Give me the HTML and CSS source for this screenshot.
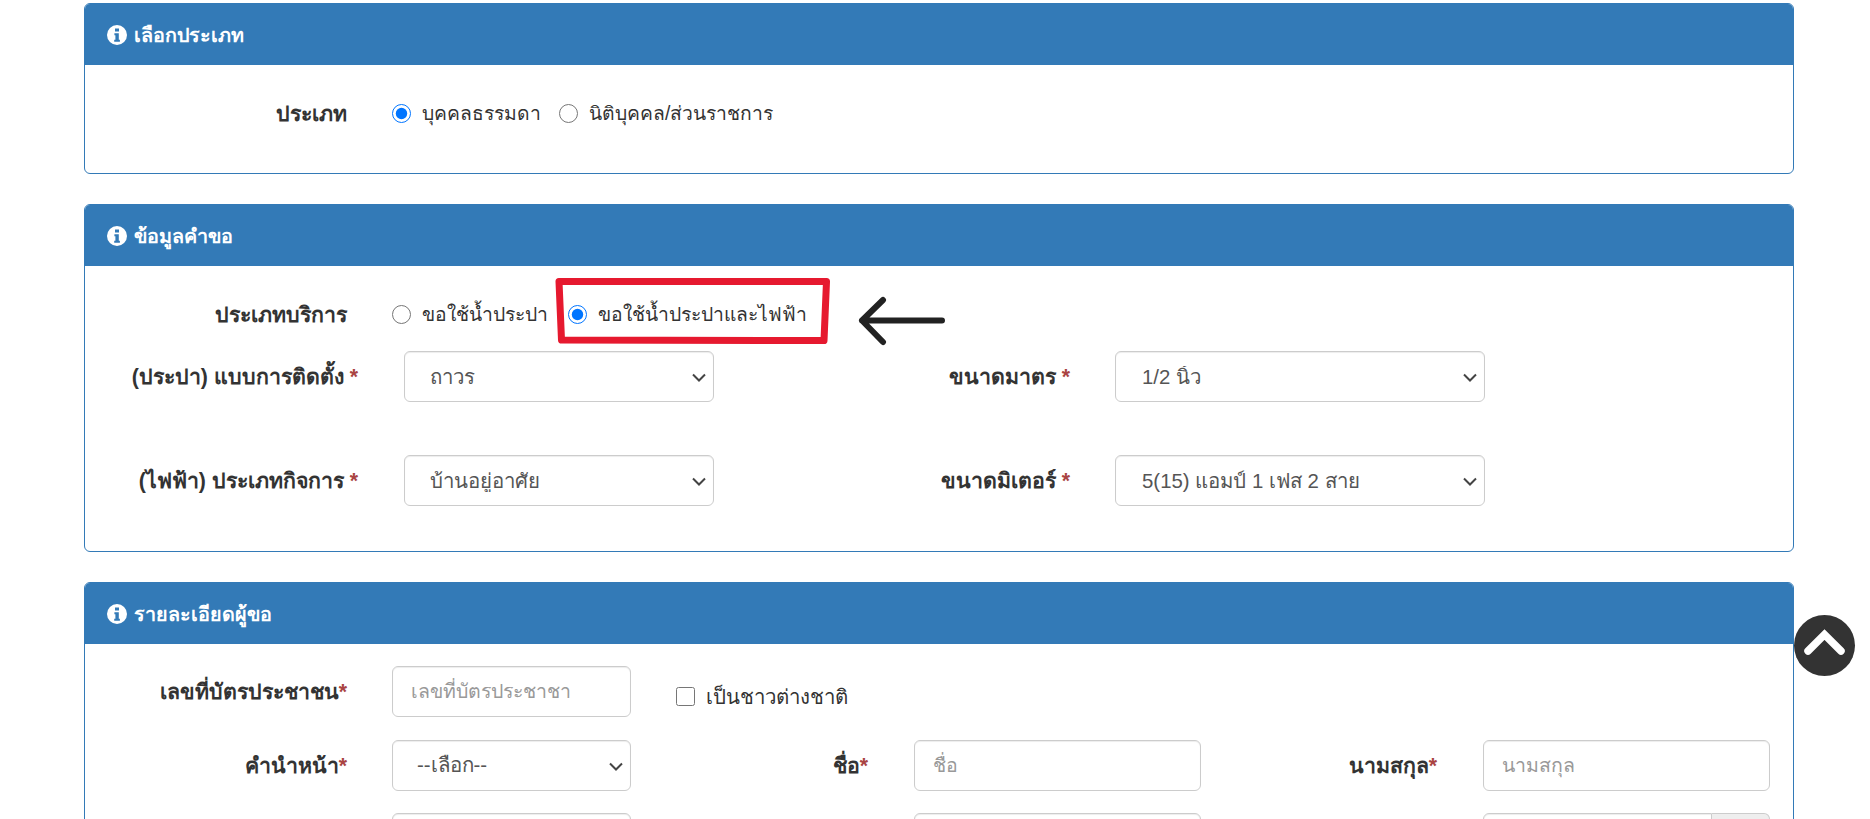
FILE: index.html
```html
<!DOCTYPE html>
<html lang="th">
<head>
<meta charset="utf-8">
<title>แบบฟอร์มคำขอ</title>
<link rel="stylesheet" href="styles.css">
</head>
<body>
<main class="page">
  <section class="panel panel-type">
    <h2 class="panel-heading"><svg class="info" viewBox="0 0 20 20"><circle cx="10" cy="10" r="10" fill="#fff"/><path d="M8 3.6h4v3h-4zM7.4 8.3h4.4v6.4h1.1v2H7.2v-2h1.2v-4.400H7.400z" fill="#337ab7"/></svg>เลือกประเภท</h2>
    <div class="panel-body">
      <div class="row row-radio">
        <span class="label">ประเภท</span>
        <label class="radio r1"><input type="radio" name="t" checked>บุคคลธรรมดา</label>
        <label class="radio"><input type="radio" name="t">นิติบุคคล/ส่วนราชการ</label>
      </div>
    </div>
  </section>

  <section class="panel panel-req">
    <h2 class="panel-heading"><svg class="info" viewBox="0 0 20 20"><circle cx="10" cy="10" r="10" fill="#fff"/><path d="M8 3.6h4v3h-4zM7.4 8.3h4.4v6.4h1.1v2H7.2v-2h1.2v-4.400H7.400z" fill="#337ab7"/></svg>ข้อมูลคำขอ</h2>
    <div class="panel-body">
      <div class="row row-radio row-service">
        <span class="label">ประเภทบริการ</span>
        <label class="radio r2"><input type="radio" name="s">ขอใช้น้ำประปา</label>
        <label class="radio"><input type="radio" name="s" checked>ขอใช้น้ำประปาและไฟฟ้า</label>
      </div>
      <div class="row row-select">
        <span class="label">(ประปา) แบบการติดตั้ง <em>*</em></span>
        <select class="control sel-left"><option>ถาวร</option></select>
        <span class="label label-right">ขนาดมาตร <em>*</em></span>
        <select class="control sel-right"><option>1/2 นิ้ว</option></select>
      </div>
      <div class="row row-select">
        <span class="label">(ไฟฟ้า) ประเภทกิจการ <em>*</em></span>
        <select class="control sel-left"><option>บ้านอยู่อาศัย</option></select>
        <span class="label label-right">ขนาดมิเตอร์ <em>*</em></span>
        <select class="control sel-right"><option>5(15) แอมป์ 1 เฟส 2 สาย</option></select>
      </div>
    </div>
  </section>

  <section class="panel panel-person">
    <h2 class="panel-heading"><svg class="info" viewBox="0 0 20 20"><circle cx="10" cy="10" r="10" fill="#fff"/><path d="M8 3.6h4v3h-4zM7.4 8.3h4.4v6.4h1.1v2H7.2v-2h1.2v-4.400H7.400z" fill="#337ab7"/></svg>รายละเอียดผู้ขอ</h2>
    <div class="panel-body body-person">
      <div class="row row-person">
        <span class="label">เลขที่บัตรประชาชน<em>*</em></span>
        <input class="control col-a" placeholder="เลขที่บัตรประชาชา">
        <label class="check"><input type="checkbox">เป็นชาวต่างชาติ</label>
      </div>
      <div class="row row-person">
        <span class="label">คำนำหน้า<em>*</em></span>
        <select class="control col-a"><option>--เลือก--</option></select>
        <span class="label label-b">ชื่อ<em>*</em></span>
        <input class="control col-b" placeholder="ชื่อ">
        <span class="label label-c">นามสกุล<em>*</em></span>
        <input class="control col-c" placeholder="นามสกุล">
      </div>
      <div class="row row-person">
        <span class="label"></span>
        <input class="control col-a">
        <span class="label label-b"></span>
        <input class="control col-b">
        <span class="label label-c"></span>
        <div class="group col-c"><input class="control group-input"><span class="addon"></span></div>
      </div>
    </div>
  </section>
</main>

<svg class="mark-box" viewBox="0 0 275 66"><path d="M4 3.500 L271.500 3.500 L269 62.500 L6.500 62 Z" fill="none" stroke="#e6192f" stroke-width="7" stroke-linejoin="round"/></svg>
<svg class="mark-arrow" viewBox="0 0 88 50"><path d="M84 24.500 H4 M4 24.500 L25 4 M4 24.500 L25 46" fill="none" stroke="#222" stroke-width="6" stroke-linecap="round" stroke-linejoin="round"/></svg>
<a class="to-top" href="#"><svg viewBox="0 0 61 61"><path d="M14 36 L30.500 19.500 L47 36" fill="none" stroke="#fff" stroke-width="7.500" stroke-linecap="round" stroke-linejoin="miter"/></svg></a>
</body>
</html>
```
FILE: styles.css
```css
html, body {
  margin: 0;
  height: 819px;
  overflow: hidden;
  background: #fff;
}
body {
  font-family: "Liberation Sans", Arial, "Noto Sans", sans-serif;
  font-size: 19.3px;
  color: #333;
}
.page {
  padding: 3px 76px 0 84px;
  display: flex;
  flex-direction: column;
  gap: 30px;
}
.panel {
  box-sizing: border-box;
  border: 1px solid #337ab7;
  border-radius: 6px;
  background: #fff;
  overflow: hidden;
}
.panel-type { height: 171px; }
.panel-req { height: 348px; }
.panel-heading {
  margin: 0;
  height: 61px;
  background: #337ab7;
  color: #fff;
  font-size: 19.7px;
  font-weight: bold;
  display: flex;
  align-items: center;
  gap: 7px;
  padding-left: 22px;
  box-sizing: border-box;
}
.info { width: 20px; height: 20px; flex: none; }
.row { display: flex; align-items: center; }
.label {
  flex: none;
  width: 262px;
  text-align: right;
  font-weight: bold;
  font-size: 21.3px;
  color: #333;
}
.label em { font-style: normal; color: #a94442; }
.row-radio { padding-top: 33px; height: 30px; }
.row-radio .label { margin-right: 45px; }
.row-service { padding-top: 32px; height: 32px; }
.radio {
  display: flex;
  align-items: center;
  margin-right: 18px;
}
.radio input {
  width: 19px;
  height: 19px;
  margin: 0 11px 0 0;
  accent-color: #0075ff;
}
.r2 { margin-right: 20px; }
.row-select { height: 51px; margin-bottom: 53px; }
.row-service + .row-select { margin-top: 21px; }
.row-select .label { width: 273px; margin-right: 46px; }
.control {
  box-sizing: border-box;
  height: 51px;
  padding: 0 18px;
  border: 1px solid #ccc;
  border-radius: 6px;
  background: #fff;
  color: #555;
  font-family: inherit;
  font-size: 19.5px;
  box-shadow: inset 0 1px 1px rgba(0,0,0,.075);
  flex: none;
}
select.control {
  appearance: none;
  font-size: 20.4px;
  padding-left: 24px;
  padding-right: 24px;
  background-image: url("data:image/svg+xml;utf8,<svg xmlns='http://www.w3.org/2000/svg' width='14' height='9' viewBox='0 0 14 9'><path d='M1 1.500 L7 7.500 L13 1.500' fill='none' stroke='%23444' stroke-width='2'/></svg>");
  background-repeat: no-repeat;
  background-position: right 7px top 21px;
}
.control::placeholder { color: #999; opacity: 1; }
select.sel-left { width: 310px; padding-left: 25px; }
.row-select .label-right { width: 356px; margin-right: 45px; }
select.sel-right { width: 370px; padding-left: 26px; }
.body-person { padding-top: 22px; display: flex; flex-direction: column; gap: 22.5px; }
.row-person .label { width: 262px; margin-right: 45px; }
.col-a { width: 239px; }
.check {
  display: flex;
  align-items: center;
  margin-left: 45px;
  margin-top: 10px;
  font-size: 20.4px;
}
.check input { width: 19px; height: 19px; margin: 0 11px 0 0; }
.row-person .label-b { width: 237px; margin-right: 46px; }
.col-b { width: 287px; }
.row-person .label-c { width: 236px; margin-right: 46px; }
.col-c { width: 287px; }
.group { display: flex; flex: none; }
.group-input { flex: 1; min-width: 0; border-radius: 6px 0 0 6px; }
.addon { width: 58px; height: 51px; box-sizing: border-box; flex: none; background: #eee; border: 1px solid #ccc; border-left: 0; border-radius: 0 6px 6px 0; }
.mark-box { position: absolute; left: 555px; top: 278px; width: 275px; height: 66px; }
.mark-arrow { position: absolute; left: 858px; top: 296px; width: 88px; height: 50px; }
.to-top {
  position: absolute;
  left: 1794px;
  top: 615px;
  width: 61px;
  height: 61px;
  border-radius: 50%;
  background: #333;
}
.to-top svg { display: block; width: 61px; height: 61px; }
```
